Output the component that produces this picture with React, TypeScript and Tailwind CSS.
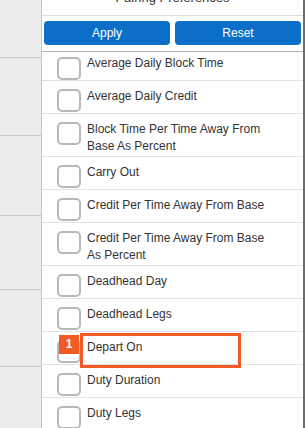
import React from "react";

type Item = { label: string; first?: boolean; flagged?: boolean };

const items: Item[] = [
  { label: "Average Daily Block Time", first: true },
  { label: "Average Daily Credit" },
  { label: "Block Time Per Time Away From Base As Percent" },
  { label: "Carry Out" },
  { label: "Credit Per Time Away From Base" },
  { label: "Credit Per Time Away From Base As Percent" },
  { label: "Deadhead Day" },
  { label: "Deadhead Legs" },
  { label: "Depart On", flagged: true },
  { label: "Duty Duration" },
  { label: "Duty Legs" },
];

// left rail cells (heights include bottom border)
const railCells = ["h-[58px]", "h-[78px]", "h-[80px]", "h-[74px]", "h-[77px]"];

function Row({ item }: { item: Item }) {
  return (
    <div
      className={`relative flex items-start pl-[15px] border-b border-[#e2e2e2] ${
        item.first ? "h-[29px]" : "pb-[1px]"
      }`}
    >
      <div
        className={`w-[24px] h-[23px] shrink-0 rounded-[5px] border-2 border-[#b8b8b8] bg-white ${
          item.first ? "mt-[5px]" : "mt-[8px]"
        }`}
      />
      <div
        className={`ml-[6px] w-[186px] text-[12px] leading-[17px] text-[#333] ${
          item.first ? "pt-[3px]" : "pt-[7px]"
        }`}
      >
        {item.label}
      </div>
      {item.flagged && (
        <>
          <div className="absolute left-[38px] top-[1px] w-[161px] h-[35px] border-[3px] border-[#f05a24]" />
          <div className="absolute left-[17px] top-[3px] w-[20px] h-[19px] bg-[#f05a24] text-white text-[12px] font-bold leading-[19px] text-center">
            1
          </div>
        </>
      )}
    </div>
  );
}

export default function App() {
  return (
    <div
      className="w-[306px] h-[428px] flex overflow-hidden bg-white"
      style={{ fontFamily: '"Liberation Sans", Arial, sans-serif' }}
    >
      {/* Left rail */}
      <div className="w-[42px] shrink-0 bg-[#ececec] border-r border-[#c6c6c6] flex flex-col">
        {railCells.map((h, i) => (
          <div key={i} className={`${h} shrink-0 border-b border-[#c6c6c6]`} />
        ))}
      </div>

      {/* Main panel */}
      <div className="w-[263px] shrink-0 border-r-2 border-[#6e6e6e] flex flex-col">
        {/* Title, scrolled mostly out of view */}
        <div className="h-[16px] shrink-0 overflow-hidden border-b border-[#dcdcdc] flex justify-center">
          <div className="mt-[-10px] text-[13px] leading-[16px] text-[#333]">
            Pairing Preferences
          </div>
        </div>

        {/* Actions */}
        <div className="h-[36px] shrink-0 flex gap-[5px] pl-[2px] pr-[1px] pt-[5px] border-b border-[#b0b0b0]">
          <button className="w-[126px] h-[24px] rounded-[4px] bg-[#0b6fc7] text-white text-[12px]">
            Apply
          </button>
          <button className="w-[126px] h-[24px] rounded-[4px] bg-[#0b6fc7] text-white text-[12px]">
            Reset
          </button>
        </div>

        {/* List */}
        <div className="flex flex-col">
          {items.map((item) => (
            <Row key={item.label} item={item} />
          ))}
        </div>
      </div>
    </div>
  );
}
